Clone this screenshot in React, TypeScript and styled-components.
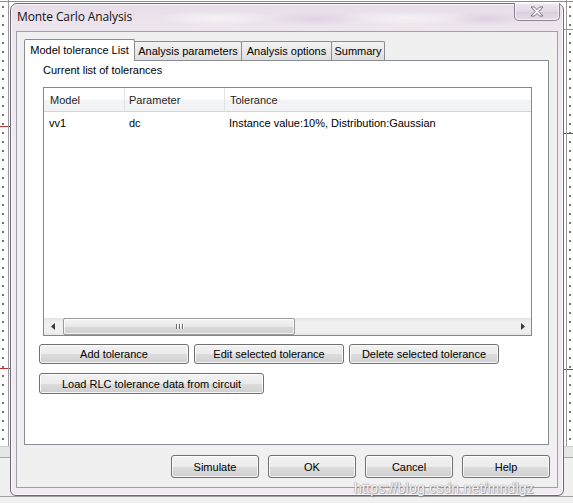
import React from "react";
import styled, { createGlobalStyle } from "styled-components";

const Global = createGlobalStyle`
  html, body { margin: 0; padding: 0; background: #fff; }
  body { font-family: "Liberation Sans", Arial, sans-serif; }
  * { box-sizing: border-box; }
`;

const UI_FONT = `"Liberation Sans", Arial, sans-serif`;

const Desktop = styled.div`
  position: relative;
  width: 573px;
  height: 503px;
  overflow: hidden;
  padding: 3px 0 0 10px;
  background-color: #fff;
  background-image:
    linear-gradient(to bottom, transparent 0 446px, #cfcfcf 446px 447px, #e6e6e6 447px 457px, #a8a8a8 457px 458px, #f0f0f0 458px 496px, #a0a0a0 496px 497px, #f0f0f0 497px),
    linear-gradient(#8c8c8c, #8c8c8c),
    linear-gradient(#999, #999),
    linear-gradient(#999, #999),
    linear-gradient(#999, #999),
    linear-gradient(#c62f2f, #c62f2f),
    linear-gradient(#c62f2f, #c62f2f),
    linear-gradient(#c62f2f, #c62f2f),
    linear-gradient(#c62f2f, #c62f2f),
    radial-gradient(circle at 1px 1px, #444 0.6px, transparent 1px);
  background-repeat: no-repeat, no-repeat, no-repeat, no-repeat, no-repeat, no-repeat, no-repeat, no-repeat, no-repeat, repeat;
  background-size:
    100% 100%,
    100% 1px,
    1px 446px,
    1px 446px,
    10px 1px,
    12px 1px,
    12px 1px,
    13px 1px,
    13px 1px,
    9px 9px;
  background-position:
    0 0,
    0 1px,
    8px 0,
    566px 0,
    563px 29px,
    0 126px,
    0 368px,
    560px 133px,
    560px 369px,
    2px 6px;
`;

const Window = styled.div`
  position: relative;
  width: 554px;
  height: 493px;
  display: flex;
  flex-direction: column;
  padding: 0 5px 7px 5px;
  border: 1px solid #6e6876;
  border-radius: 7px 7px 6px 6px;
  background:
    linear-gradient(to bottom, #e7dde9 0px, #eee6ef 26px, #f1e9f1 60px, #f2eaf2 100%);
  box-shadow: inset 0 0 0 1px rgba(255, 255, 255, 0.75);
`;

const TitleBar = styled.div`
  height: 27px;
  display: flex;
  align-items: flex-start;
  justify-content: space-between;
  background:
    radial-gradient(ellipse 60px 8px at 200px 14px, rgba(255, 255, 255, 0.55), transparent),
    radial-gradient(ellipse 50px 7px at 300px 15px, rgba(210, 190, 215, 0.45), transparent),
    radial-gradient(ellipse 70px 8px at 390px 14px, rgba(255, 255, 255, 0.5), transparent),
    radial-gradient(ellipse 40px 7px at 470px 15px, rgba(205, 185, 212, 0.45), transparent);
`;

const Title = styled.div`
  margin: 5px 0 0 1px;
  font-family: "Open Sans", "Noto Sans", sans-serif;
  font-size: 12px;
  line-height: 16px;
  letter-spacing: -0.1px;
  color: #111;
`;

const CloseButton = styled.div`
  width: 46px;
  height: 18px;
  margin: -1px -2px 0 0;
  display: flex;
  align-items: center;
  justify-content: center;
  border: 1px solid #8a8290;
  border-top: none;
  border-radius: 0 0 5px 5px;
  background: linear-gradient(#efe7f0, #e2d8e5 50%, #d9cddd 51%, #e6dde9);
  box-shadow: inset 0 0 0 1px rgba(255, 255, 255, 0.6);
`;

const Client = styled.div`
  flex: 1;
  display: flex;
  flex-direction: column;
  padding: 7px 8px 9px 7px;
  border: 1px solid #a39fa8;
  background: #f0f0f0;
`;

const TabStrip = styled.div`
  height: 21px;
  display: flex;
  align-items: flex-end;
`;

const Tab = styled.div<{ $active?: boolean; $w: number }>`
  position: relative;
  z-index: ${(p) => (p.$active ? 2 : 1)};
  width: ${(p) => p.$w}px;
  height: ${(p) => (p.$active ? 22 : 19)}px;
  margin-left: -1px;
  margin-bottom: ${(p) => (p.$active ? -1 : 0)}px;
  padding-bottom: ${(p) => (p.$active ? 2 : 0)}px;
  display: flex;
  align-items: center;
  justify-content: center;
  border: 1px solid #898c95;
  border-bottom: none;
  border-radius: 2px 2px 0 0;
  background: ${(p) => (p.$active ? "#ffffff" : "linear-gradient(#f3f3f3, #e9e9e9 50%, #dedede 100%)")};
  font-family: ${UI_FONT};
  font-size: 11px;
  color: #000;
  white-space: nowrap;
  &:first-child { margin-left: 0; }
`;

const Panel = styled.div`
  flex: 1;
  display: flex;
  flex-direction: column;
  padding: 2px 16px 0 14px;
  border: 1px solid #898c95;
  background: #ffffff;
`;

const Label = styled.div`
  margin-left: 4px;
  font-family: ${UI_FONT};
  font-size: 11px;
  line-height: 14px;
  color: #000;
`;

const ListBox = styled.div`
  width: 489px;
  height: 249px;
  margin: 10px 0 0 4px;
  display: flex;
  flex-direction: column;
  border: 1px solid #828790;
  background: #fff;
`;

const Columns = styled.div`
  display: grid;
  grid-template-columns: 81px 100px 1fr;
`;

const Header = styled(Columns)`
  height: 24px;
  border-bottom: 1px solid #d5d5d5;
  background: linear-gradient(#ffffff 0%, #ffffff 45%, #f3f4f6 55%, #f1f2f4 100%);
`;

const HeaderCell = styled.div<{ $pad: number }>`
  display: flex;
  align-items: center;
  padding-left: ${(p) => p.$pad}px;
  border-right: 1px solid #e2e3e6;
  font-family: ${UI_FONT};
  font-size: 11px;
  color: #1e1e1e;
  &:last-child { border-right: none; }
`;

const Row = styled(Columns)`
  height: 22px;
`;

const Cell = styled.div<{ $pad: number }>`
  display: flex;
  align-items: center;
  padding-left: ${(p) => p.$pad}px;
  font-family: ${UI_FONT};
  font-size: 11px;
  color: #000;
  white-space: nowrap;
`;

const ListSpacer = styled.div`
  flex: 1;
`;

const HScroll = styled.div`
  height: 17px;
  display: flex;
  align-items: stretch;
  background: linear-gradient(#e3e3e3, #efefef 20%, #f0f0f0 80%, #e6e6e6);
`;

const ArrowBox = styled.div`
  width: 17px;
  display: flex;
  align-items: center;
  justify-content: center;
`;

const Track = styled.div`
  flex: 1;
  display: flex;
  align-items: stretch;
  padding: 0 2px;
`;

const Thumb = styled.div<{ $w: number }>`
  width: ${(p) => p.$w}px;
  display: flex;
  align-items: center;
  justify-content: center;
  gap: 2px;
  border: 1px solid #9b9b9b;
  border-radius: 2px;
  background: linear-gradient(#f4f4f4, #e9e9e9 50%, #d9d9d9 51%, #d2d2d2);
  box-shadow: inset 0 0 0 1px rgba(255, 255, 255, 0.7);
`;

const Grip = styled.span`
  width: 1px;
  height: 5px;
  background: #6a6a6a;
  box-shadow: 1px 0 0 #fff;
`;

const ButtonRow = styled.div<{ $top: number }>`
  display: flex;
  gap: 5px;
  margin-top: ${(p) => p.$top}px;
`;

const Button = styled.div<{ $w: number; $h: number }>`
  width: ${(p) => p.$w}px;
  height: ${(p) => p.$h}px;
  display: flex;
  align-items: center;
  justify-content: center;
  border: 1px solid #707070;
  border-radius: 3px;
  background: linear-gradient(#f2f2f2 0%, #ebebeb 50%, #dddddd 51%, #cfcfcf 100%);
  box-shadow: inset 0 0 0 1px rgba(255, 255, 255, 0.8);
  font-family: ${UI_FONT};
  font-size: 11px;
  color: #000;
  white-space: nowrap;
`;

const Footer = styled.div`
  display: flex;
  justify-content: flex-end;
  gap: 9px;
  margin: 10px -1px 0 0;
`;

const Watermark = styled.div`
  position: absolute;
  left: 354px;
  top: 480px;
  font-family: "Liberation Sans", Arial, sans-serif;
  font-size: 14px;
  letter-spacing: 0.2px;
  color: rgba(255, 255, 255, 0.92);
  text-shadow: 0 0 1px #9a9a9a, 0 0 1px #9a9a9a, 1px 1px 1px rgba(120, 120, 120, 0.6);
  white-space: nowrap;
  pointer-events: none;
`;

const CloseGlyph = () => (
  <svg width="16" height="11" viewBox="0 0 16 11">
    <path
      d="M2 1 L5.5 1 L8 3.6 L10.5 1 L14 1 L9.8 5.5 L14 10 L10.5 10 L8 7.4 L5.5 10 L2 10 L6.2 5.5 Z"
      fill="#fafafa"
      stroke="#6f6878"
      strokeWidth="0.9"
      strokeLinejoin="round"
    />
  </svg>
);

const LeftArrow = () => (
  <svg width="4" height="7" viewBox="0 0 4 7">
    <path d="M4 0 L0 3.5 L4 7 Z" fill="#3a3a3a" />
  </svg>
);

const RightArrow = () => (
  <svg width="4" height="7" viewBox="0 0 4 7">
    <path d="M0 0 L4 3.5 L0 7 Z" fill="#3a3a3a" />
  </svg>
);

const tabs = [
  { label: "Model tolerance List", w: 111, active: true },
  { label: "Analysis parameters", w: 108 },
  { label: "Analysis options", w: 91 },
  { label: "Summary", w: 54 },
];

const rows = [
  { model: "vv1", param: "dc", tol: "Instance value:10%, Distribution:Gaussian" },
];

export default function App() {
  return (
    <>
      <Global />
      <Desktop>
        <Window>
          <TitleBar>
            <Title>Monte Carlo Analysis</Title>
            <CloseButton>
              <CloseGlyph />
            </CloseButton>
          </TitleBar>
          <Client>
            <TabStrip>
              {tabs.map((t) => (
                <Tab key={t.label} $w={t.w} $active={t.active}>
                  {t.label}
                </Tab>
              ))}
            </TabStrip>
            <Panel>
              <Label>Current list of tolerances</Label>
              <ListBox>
                <Header>
                  <HeaderCell $pad={6}>Model</HeaderCell>
                  <HeaderCell $pad={4}>Parameter</HeaderCell>
                  <HeaderCell $pad={5}>Tolerance</HeaderCell>
                </Header>
                {rows.map((r) => (
                  <Row key={r.model}>
                    <Cell $pad={5}>{r.model}</Cell>
                    <Cell $pad={4}>{r.param}</Cell>
                    <Cell $pad={4}>{r.tol}</Cell>
                  </Row>
                ))}
                <ListSpacer />
                <HScroll>
                  <ArrowBox>
                    <LeftArrow />
                  </ArrowBox>
                  <Track>
                    <Thumb $w={232}>
                      <Grip />
                      <Grip />
                      <Grip />
                    </Thumb>
                  </Track>
                  <ArrowBox>
                    <RightArrow />
                  </ArrowBox>
                </HScroll>
              </ListBox>
              <ButtonRow $top={8}>
                <Button $w={150} $h={20}>Add tolerance</Button>
                <Button $w={150} $h={20}>Edit selected tolerance</Button>
                <Button $w={150} $h={20}>Delete selected tolerance</Button>
              </ButtonRow>
              <ButtonRow $top={9}>
                <Button $w={225} $h={21}>Load RLC tolerance data from circuit</Button>
              </ButtonRow>
            </Panel>
            <Footer>
              <Button $w={88} $h={23}>Simulate</Button>
              <Button $w={88} $h={23}>OK</Button>
              <Button $w={88} $h={23}>Cancel</Button>
              <Button $w={88} $h={23}>Help</Button>
            </Footer>
          </Client>
        </Window>
        <Watermark>https://blog.csdn.net/mndlgz</Watermark>
      </Desktop>
    </>
  );
}
